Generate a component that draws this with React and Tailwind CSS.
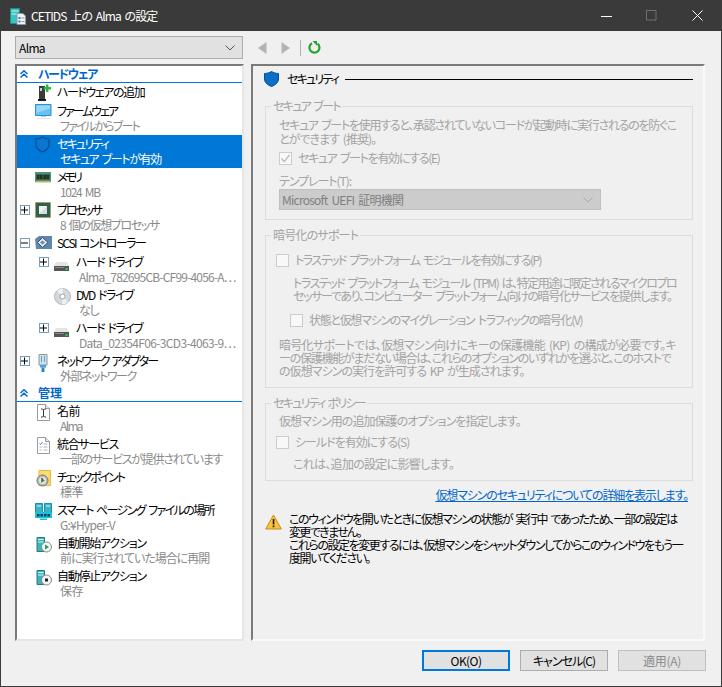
import React from "react";

const Tower = ({ children }) => (
  <svg width="16" height="17" viewBox="0 0 16 17">
    <path d="M1 1.500h7.500v14H1z" fill="#3fb4b8" stroke="#1f7f86" />
    <path d="M2 3.500h5.500M2 6h5.500" stroke="#d8f4f4" />
    {children}
  </svg>
);

const Icons = {
  add: (
    <svg width="16" height="17" viewBox="0 0 16 17">
      <path d="M4 2h6v15H4z" fill="#3a3a3a" />
      <path d="M5 4h2v3H5z" fill="#cfcfcf" />
      <path d="M3 15h8v2H3z" fill="#1c1c1c" />
      <path d="M11 0.500h2.400v2.600H16v2.400h-2.600V8H11V5.500H8.500V3.100H11z" fill="#2fb344" />
    </svg>
  ),
  monitor: (
    <svg width="17" height="16" viewBox="0 0 17 16">
      <path d="M0.500 0.500h15.500v11H0.500z" fill="#69c0f2" stroke="#2b8fd6" />
      <path d="M1.500 1.500h13.500v3L1.500 9z" fill="#9ad6f7" />
      <path d="M6 12h5v1H6z" fill="#b9c4cc" />
      <path d="M2 14h13v1H2z" fill="#dfe4e8" />
    </svg>
  ),
  shieldDark: (
    <svg width="15" height="17" viewBox="0 0 15 17">
      <path d="M7.500 1C5.400 2.600 3.400 3 1 3v5.500c0 3.500 2.700 5.800 6.500 7.500 3.800-1.700 6.500-4 6.500-7.500V3C11.600 3 9.600 2.600 7.500 1z" fill="#0876d2" stroke="#0b4e8e" strokeWidth="1.200" />
    </svg>
  ),
  memory: (
    <svg width="16" height="11" viewBox="0 0 16 11">
      <path d="M0 0h16v10H0z" fill="#4f9478" />
      <path d="M1 2h14v6H1z" fill="#2f6b52" />
      <path d="M2 3h2.500v4H2zM5 3h2.500v4H5zM8.500 3H11v4H8.500zM11.500 3H14v4h-2.500z" fill="#2e2e22" />
      <path d="M1 9h14v1.500H1z" fill="#c6b15f" />
    </svg>
  ),
  cpu: (
    <svg width="16" height="16" viewBox="0 0 16 16">
      <path d="M0.500 0.500h15v15H0.500z" fill="#2d6150" stroke="#b5972e" strokeDasharray="1 1" />
      <path d="M2 2h12v12H2z" fill="#2d6150" />
      <path d="M4 4h8v8H4z" fill="#d9dcd9" />
      <path d="M4 4h8L4 12z" fill="#f2f2f2" />
    </svg>
  ),
  scsi: (
    <svg width="17" height="14" viewBox="0 0 17 14">
      <path d="M0 3l4-3h13v13H1z" fill="#5f86ad" />
      <path d="M7.500 1.500L13 6.500 7.500 11.500 2.500 6.500z" fill="#dfe6ec" stroke="#33506c" />
      <path d="M7.500 4.500L10 6.500 7.500 8.500 5 6.500z" fill="#6d8cab" />
    </svg>
  ),
  hdd: (
    <svg width="15" height="9" viewBox="0 0 15 9">
      <path d="M2 0h11l2 4H0z" fill="#e4e4e4" />
      <path d="M0 4h15v5H0z" fill="#555" />
      <path d="M1 5h9v1H1z" fill="#888" />
      <path d="M11.500 6h2v2h-2z" fill="#35d24a" />
    </svg>
  ),
  dvd: (
    <svg width="17" height="17" viewBox="0 0 17 17">
      <circle cx="8.500" cy="8.500" r="8" fill="#d4d8dc" stroke="#b4b8bc" />
      <path d="M8.500 8.500L3 3a8 8 0 0 1 6-2.400zM8.500 8.500L14 14a8 8 0 0 1-6 2.400z" fill="#eef0f2" />
      <circle cx="8.500" cy="8.500" r="2.500" fill="#fff" stroke="#a0a4a8" />
    </svg>
  ),
  net: (
    <svg width="12" height="18" viewBox="0 0 12 18">
      <path d="M2 0.500h8v10.500H2z" fill="#cfe0ea" stroke="#7d9cb0" />
      <path d="M4 2h1v6H4zM7 2h1v6H7z" fill="#7d9cb0" />
      <path d="M3 11h6v2.500H3z" fill="#4aa3d8" />
      <path d="M4.500 13.500h3V18h-3z" fill="#2b86c2" />
    </svg>
  ),
  name: (
    <svg width="13" height="17" viewBox="0 0 13 17">
      <path d="M0.500 0.500h8l4 4v12H0.500z" fill="#fff" stroke="#9a9a9a" />
      <path d="M8.500 0.500v4h4" fill="#e8e8e8" stroke="#9a9a9a" />
      <path d="M4 5h1.500L6.500 6 7.500 5H9M6.500 6v6M4 13h1.500l1-1 1 1H9" fill="none" stroke="#333" />
    </svg>
  ),
  svc: (
    <svg width="13" height="17" viewBox="0 0 13 17">
      <path d="M0.500 0.500h8l4 4v12H0.500z" fill="#fff" stroke="#9a9a9a" />
      <path d="M8.500 0.500v4h4" fill="#e8e8e8" stroke="#9a9a9a" />
      <path d="M2.500 6.500l1 1 2-2.500" fill="none" stroke="#2f80c8" />
      <path d="M6.500 7h4M2.500 10h2M6.500 10h4M2.500 13h2M6.500 13h4" stroke="#aab4bc" />
    </svg>
  ),
  check: (
    <svg width="15" height="17" viewBox="0 0 15 17">
      <path d="M3 0.500h11.500v15H3z" fill="#fbd96b" stroke="#e5bb3c" />
      <path d="M11 1v14" stroke="#f7e7a6" />
      <circle cx="6.500" cy="10.500" r="5.500" fill="#b9b9b9" stroke="#777" />
      <circle cx="6.500" cy="10.500" r="3.500" fill="#e9e9e9" />
      <path d="M5 7.500l4 3-4 2.500z" fill="#2f9e44" />
      <path d="M6.500 8v3" stroke="#c0392b" />
    </svg>
  ),
  paging: (
    <svg width="17" height="17" viewBox="0 0 17 17">
      <path d="M0.500 0.500h7v10h-7zM9.500 0.500h7v10h-7z" fill="#38b6c8" stroke="#1f8fa3" />
      <path d="M2 3h4M11 3h4" stroke="#d8f6fa" />
      <path d="M0 9h17v6H0z" fill="#19c1dc" />
      <path d="M2 11h2.500v2.500H2zM5.500 11H8v2.500H5.500zM9 11h2.500v2.500H9zM12.500 11H15v2.500h-2.500z" fill="#123a55" />
      <path d="M5 15.500h7V17H5z" fill="#19c1dc" />
    </svg>
  ),
  start: (
    <Tower>
      <circle cx="10.500" cy="11" r="5" fill="#f4f4f4" stroke="#8a8a8a" />
      <path d="M9 8.500l4 2.500-4 2.500z" fill="#21a04a" />
    </Tower>
  ),
  stop: (
    <Tower>
      <circle cx="10.500" cy="11" r="5" fill="#f4f4f4" stroke="#8a8a8a" />
      <path d="M9 9.500h3v3H9z" fill="#222" />
    </Tower>
  ),
};

const Expander = ({ open }) => (
  <span className="flex h-[10px] w-[10px] items-center justify-center border border-[#7a9cc0] bg-white">
    <svg width="8" height="8" viewBox="0 0 8 8">
      <path d={open ? "M0 4h7" : "M0 4h7M3.500 0.500v7"} stroke="#000" fill="none" />
    </svg>
  </span>
);

const Row = ({ icon, title, sub, tt, st, level = 0, exp, selected, single, iconTop = "pt-[1px]" }) => (
  <div className={`flex ${single ? "h-[19px]" : "h-[33px]"} ${selected ? "bg-[#0078d7] text-white" : "text-black"} ${level ? "pl-[19px]" : ""}`}>
    <div className="flex w-[18px] shrink-0 justify-start pl-[3px] pt-[4px]">
      {exp ? <Expander open={exp === "open"} /> : null}
    </div>
    <div className={`w-[22px] shrink-0 ${iconTop}`}>{icon}</div>
    <div className="min-w-0 flex-1 whitespace-nowrap">
      <div className={`h-[16px] pt-[1px] leading-[16px] ${tt}`}>{title}</div>
      {sub ? <div className={`h-[15px] pl-[3px] leading-[15px] ${st} ${selected ? "text-white" : "text-[#8a8a8a]"}`}>{sub}</div> : null}
    </div>
  </div>
);

const Section = ({ title, tt }) => (
  <div className="flex h-[17px] shrink-0 items-center border-b border-[#0078d7] pl-[3px] font-bold text-[#0066cc]">
    <svg width="8" height="8" viewBox="0 0 8 8" className="shrink-0">
      <path d="M0.500 4L4 0.800 7.500 4M0.500 7.500L4 4.300 7.500 7.500" fill="none" stroke="#0066cc" strokeWidth="1.500" />
    </svg>
    <span className={`ml-[10px] ${tt}`}>{title}</span>
  </div>
);

const Check = ({ checked }) => (
  <span className="flex h-[13px] w-[13px] shrink-0 items-center justify-center border border-[#cccccc] bg-[#f8f8f8]">
    {checked ? (
      <svg width="11" height="11" viewBox="0 0 11 11">
        <path d="M1.500 5.500l2.800 3L9.500 1.800" fill="none" stroke="#b5b5b5" strokeWidth="1.200" />
      </svg>
    ) : null}
  </span>
);

const Group = ({ legend, tt, className, children }) => (
  <div className={`relative border border-[#dcdcdc] ${className}`}>
    <span className={`absolute left-[5px] top-[-9px] whitespace-nowrap bg-[#f0f0f0] px-[2px] leading-[16px] ${tt}`}>{legend}</span>
    {children}
  </div>
);

const Btn = ({ children, className }) => (
  <div className={`flex h-[21px] w-[88px] items-center justify-center border bg-[#e1e1e1] ${className}`}>{children}</div>
);

export default function App() {
  return (
    <div className="flex h-[687px] w-[722px] flex-col overflow-hidden border-x border-b border-[#3c3c3c] bg-[#f0f0f0] text-[12px] leading-[14px] [word-spacing:2px] font-['Noto_Sans_CJK_JP','Noto_Sans',sans-serif] [font-feature-settings:'palt']">
      <div className="flex h-[31px] shrink-0 items-center bg-[#3a3a3a] pl-[9px] text-white">
        <svg width="16" height="18" viewBox="0 0 16 18" className="shrink-0">
          <path d="M0.500 1.500h9v15h-9z" fill="#3ec4c0" stroke="#1d8f8f" />
          <path d="M1.500 4h7M1.500 7h7" stroke="#c8f2f0" />
          <path d="M7 6.500h6l2.500 2.500v8.500H7z" fill="#eef2f6" stroke="#8a98a6" />
          <path d="M8.500 10h2v2h-2zM8.500 13.500h2v2h-2z" fill="#3a78c0" />
          <path d="M11.500 11h3M11.500 14.500h3" stroke="#8a98a6" />
        </svg>
        <span className="ml-[5px] tracking-[-0.9px]">CETIDS 上の Alma の設定</span>
        <div className="ml-auto flex items-center pr-[18px]">
          <svg width="12" height="12" viewBox="0 0 12 12"><path d="M0 6.500h11" stroke="#fff" /></svg>
          <svg width="11" height="11" viewBox="0 0 11 11" className="ml-[33px]"><path d="M0.500 0.500h9.500v9.500H0.500z" fill="none" stroke="#707070" /></svg>
          <svg width="11" height="11" viewBox="0 0 11 11" className="ml-[35px]"><path d="M0.500 0.500l10 10M10.500 0.500l-10 10" stroke="#fff" /></svg>
        </div>
      </div>

      <div className="flex flex-1 gap-[7px] pl-[14px] pr-[16px] pt-[5px]">
        <div className="flex w-[229px] shrink-0 flex-col">
          <div className="flex h-[23px] w-[228px] shrink-0 items-center justify-between border border-[#adadad] bg-[#e1e1e1] pl-[3px] pr-[7px] text-black">
            <span className="tracking-[-0.65px]">Alma</span>
            <svg width="10" height="6" viewBox="0 0 10 6"><path d="M0.500 0.500L5 5l4.500-4.500" fill="none" stroke="#555" /></svg>
          </div>
          <div className="mt-[5px] flex h-[577px] shrink-0 flex-col overflow-hidden border-2 border-b-[#e6e6e6] border-l-[#7a7a7a] border-r-[#e6e6e6] border-t-[#7a7a7a] bg-white">
            <Section title="ハードウェア" tt="tracking-[-1.3px]" />
            <Row icon={Icons.add} title="ハードウェアの追加" tt="tracking-[-1.45px]" single />
            <Row icon={Icons.monitor} iconTop="pt-[2px]" title="ファームウェア" tt="tracking-[-2.05px]" sub="ファイルからブート" st="tracking-[-1.8px]" />
            <Row icon={Icons.shieldDark} title="セキュリティ" tt="tracking-[-1.85px]" sub="セキュア ブートが有効" st="tracking-[-1.35px]" selected />
            <Row icon={Icons.memory} iconTop="pt-[4px]" title="メモリ" tt="tracking-[-2.9px]" sub="1024 MB" st="tracking-[-1.3px]" />
            <Row icon={Icons.cpu} title="プロセッサ" tt="tracking-[-2.2px]" sub="8 個の仮想プロセッサ" st="tracking-[-1.35px]" exp="closed" />
            <Row icon={Icons.scsi} iconTop="pt-[2px]" title="SCSI コントローラー" tt="tracking-[-1.55px]" exp="open" single />
            <Row level={1} icon={Icons.hdd} iconTop="pt-[9px]" title="ハード ドライブ" tt="tracking-[-1.55px]" sub="Alma_782695CB-CF99-4056-A…" st="tracking-[-0.8px]" exp="closed" />
            <Row level={1} icon={Icons.dvd} iconTop="pt-[2px]" title="DVD ドライブ" tt="tracking-[-1.5px]" sub="なし" st="tracking-[-1.45px]" />
            <Row level={1} icon={Icons.hdd} iconTop="pt-[9px]" title="ハード ドライブ" tt="tracking-[-1.55px]" sub="Data_02354F06-3CD3-4063-9…" st="tracking-[-0.65px]" exp="closed" />
            <Row icon={Icons.net} iconTop="pt-[2px] pl-[2px]" title="ネットワーク アダプター" tt="tracking-[-1.95px]" sub="外部ネットワーク" st="tracking-[-1.45px]" exp="closed" />
            <Section title="管理" tt="tracking-[0px]" />
            <Row icon={Icons.name} iconTop="pt-[2px] pl-[2px]" title="名前" tt="tracking-[-0.5px]" sub="Alma" st="tracking-[-1.65px]" />
            <Row icon={Icons.svc} iconTop="pt-[2px] pl-[2px]" title="統合サービス" tt="tracking-[-1.3px]" sub="一部のサービスが提供されています" st="tracking-[-1.3px]" />
            <Row icon={Icons.check} iconTop="pt-[2px] pl-[1px]" title="チェックポイント" tt="tracking-[-2px]" sub="標準" st="tracking-[-0.5px]" />
            <Row icon={Icons.paging} iconTop="pt-[2px]" title="スマート ページング ファイルの場所" tt="tracking-[-1.6px]" sub="G:¥Hyper-V" st="tracking-[-0.75px]" />
            <Row icon={Icons.start} iconTop="pt-[2px] pl-[1px]" title="自動開始アクション" tt="tracking-[-1.25px]" sub="前に実行されていた場合に再開" st="tracking-[-1px]" />
            <Row icon={Icons.stop} iconTop="pt-[2px] pl-[1px]" title="自動停止アクション" tt="tracking-[-1.25px]" sub="保存" st="tracking-[-0.5px]" />
          </div>
        </div>

        <div className="flex min-w-0 flex-1 flex-col">
          <div className="flex h-[23px] shrink-0 items-center pl-[7px]">
            <svg width="9" height="12" viewBox="0 0 9 12"><path d="M8.500 0v12L0 6z" fill="#b4b4b4" /></svg>
            <svg width="9" height="12" viewBox="0 0 9 12" className="ml-[14px]"><path d="M0.500 0v12L9 6z" fill="#b4b4b4" /></svg>
            <span className="ml-[10px] h-[16px] w-px bg-[#b0b0b0]" />
            <svg width="13" height="13" viewBox="0 0 13 13" className="ml-[7px]">
              <path d="M4 2.300A5 5 0 1 0 9.500 2.700" fill="none" stroke="#22a52c" strokeWidth="2.200" />
              <path d="M4.500 0l4.500 0v4.800z" fill="#22a52c" />
            </svg>
          </div>

          <div className="mt-[5px] flex h-[577px] shrink-0 flex-col overflow-hidden border-2 border-b-[#fafafa] border-l-[#7a7a7a] border-r-[#fafafa] border-t-[#7a7a7a] pl-[12px] pr-[10px] text-[#a3a3a3]">
            <div className="mt-[5px] flex h-[16px] shrink-0 items-center text-black">
              <svg width="15" height="16" viewBox="0 0 15 16" className="-ml-[1px] shrink-0">
                <path d="M7.500 0.500C5.400 1.800 3.200 2.400 0.500 2.500V8c0 3.400 2.800 5.900 7 7.500 4.200-1.600 7-4.100 7-7.500V2.500c-2.700-.1-4.900-.7-7-2z" fill="#0a6fc6" stroke="#064f94" />
              </svg>
              <span className="ml-[8px] whitespace-nowrap tracking-[-1.85px]">セキュリティ</span>
              <span className="ml-[7px] h-px flex-1 bg-black" />
            </div>

            <Group legend="セキュア ブート" tt="tracking-[-1.65px]" className="mt-[19px] h-[114px] shrink-0 pl-[13px] pt-[11px]">
              <div className="whitespace-nowrap leading-[14px]">
                <div className="tracking-[-1.25px]">セキュア ブートを使用すると、承認されていないコードが起動時に実行されるのを防ぐこ</div>
                <div className="tracking-[-0.95px]">とができます (推奨)。</div>
              </div>
              <div className="mt-[5px] flex items-center gap-[6px]">
                <Check checked />
                <span className="tracking-[-1.3px]">セキュア ブートを有効にする(E)</span>
              </div>
              <div className="mt-[9px] leading-[14px] tracking-[-1.05px]">テンプレート(T):</div>
              <div className="mt-[1px] flex h-[21px] w-[322px] items-center justify-between border border-[#bfbfbf] bg-[#cccccc] pl-[2px] pr-[7px] text-[#808080]">
                <span className="tracking-[-0.75px]">Microsoft UEFI 証明機関</span>
                <svg width="10" height="6" viewBox="0 0 10 6"><path d="M0.500 0.500L5 5l4.500-4.500" fill="none" stroke="#a8a8a8" /></svg>
              </div>
            </Group>

            <Group legend="暗号化のサポート" tt="tracking-[-0.8px]" className="mt-[15px] h-[153px] shrink-0 pl-[10px] pt-[17px]">
              <div className="flex items-center gap-[6px]">
                <Check />
                <span className="tracking-[-1.5px]">トラステッド プラットフォーム モジュールを有効にする(P)</span>
              </div>
              <div className="ml-[17px] mt-[9px] whitespace-nowrap leading-[13px]">
                <div className="tracking-[-1.45px]">トラステッド プラットフォーム モジュール (TPM) は、特定用途に限定されるマイクロプロ</div>
                <div className="tracking-[-1.35px]">セッサーであり、コンピューター プラットフォーム向けの暗号化サービスを提供します。</div>
              </div>
              <div className="ml-[14px] mt-[11px] flex items-center gap-[6px]">
                <Check />
                <span className="tracking-[-1.3px]">状態と仮想マシンのマイグレーション トラフィックの暗号化(V)</span>
              </div>
              <div className="ml-[3px] mt-[11px] whitespace-nowrap leading-[13px]">
                <div className="tracking-[-0.7px]">暗号化サポートでは、仮想マシン向けにキーの保護機能 (KP) の構成が必要です。キ</div>
                <div className="tracking-[-1.25px]">ーの保護機能がまだない場合は、これらのオプションのいずれかを選ぶと、このホストで</div>
                <div className="tracking-[-0.95px]">の仮想マシンの実行を許可する KP が生成されます。</div>
              </div>
            </Group>

            <Group legend="セキュリティ ポリシー" tt="tracking-[-1.75px]" className="mt-[15px] h-[78px] shrink-0 pl-[10px] pt-[10px]">
              <div className="ml-[3px] tracking-[-0.95px]">仮想マシン用の追加保護のオプションを指定します。</div>
              <div className="mt-[7px] flex items-center gap-[6px]">
                <Check />
                <span className="tracking-[-1px]">シールドを有効にする(S)</span>
              </div>
              <div className="ml-[17px] mt-[8px] tracking-[-0.7px]">これは、追加の設定に影響します。</div>
            </Group>

            <div className="mt-[7px] self-end pr-[5px] leading-[14px] tracking-[-1.15px] text-[#0066cc] underline">仮想マシンのセキュリティについての詳細を表示します。</div>

            <div className="mt-[10px] flex text-black">
              <svg width="17" height="16" viewBox="0 0 17 16" className="mt-[2px] shrink-0">
                <path d="M8.500 1L16.300 15H0.700z" fill="#f9c33a" stroke="#c8891c" strokeLinejoin="round" />
                <path d="M7.700 5h1.700v5.500H7.700zM7.700 11.500h1.700v1.700H7.700z" fill="#222" />
              </svg>
              <div className="ml-[7px] whitespace-nowrap leading-[13px]">
                <div className="tracking-[-1.4px]">このウィンドウを開いたときに仮想マシンの状態が 実行中 であったため、一部の設定は</div>
                <div className="tracking-[-1.65px]">変更できません。</div>
                <div className="tracking-[-1.45px]">これらの設定を変更するには、仮想マシンをシャットダウンしてからこのウィンドウをもう一</div>
                <div className="tracking-[-1.45px]">度開いてください。</div>
              </div>
            </div>
          </div>
        </div>
      </div>

      <div className="flex h-[46px] shrink-0 justify-end gap-[10px] pr-[15px] pt-[9px] text-black">
        <Btn className="border-2 border-[#0078d7] tracking-[-0.55px]">OK(O)</Btn>
        <Btn className="border-[#adadad] tracking-[-1px]">キャンセル(C)</Btn>
        <Btn className="border-[#bfbfbf] bg-[#cccccc] text-[#8a8a8a] tracking-[-0.3px]">適用(A)</Btn>
      </div>
    </div>
  );
}
